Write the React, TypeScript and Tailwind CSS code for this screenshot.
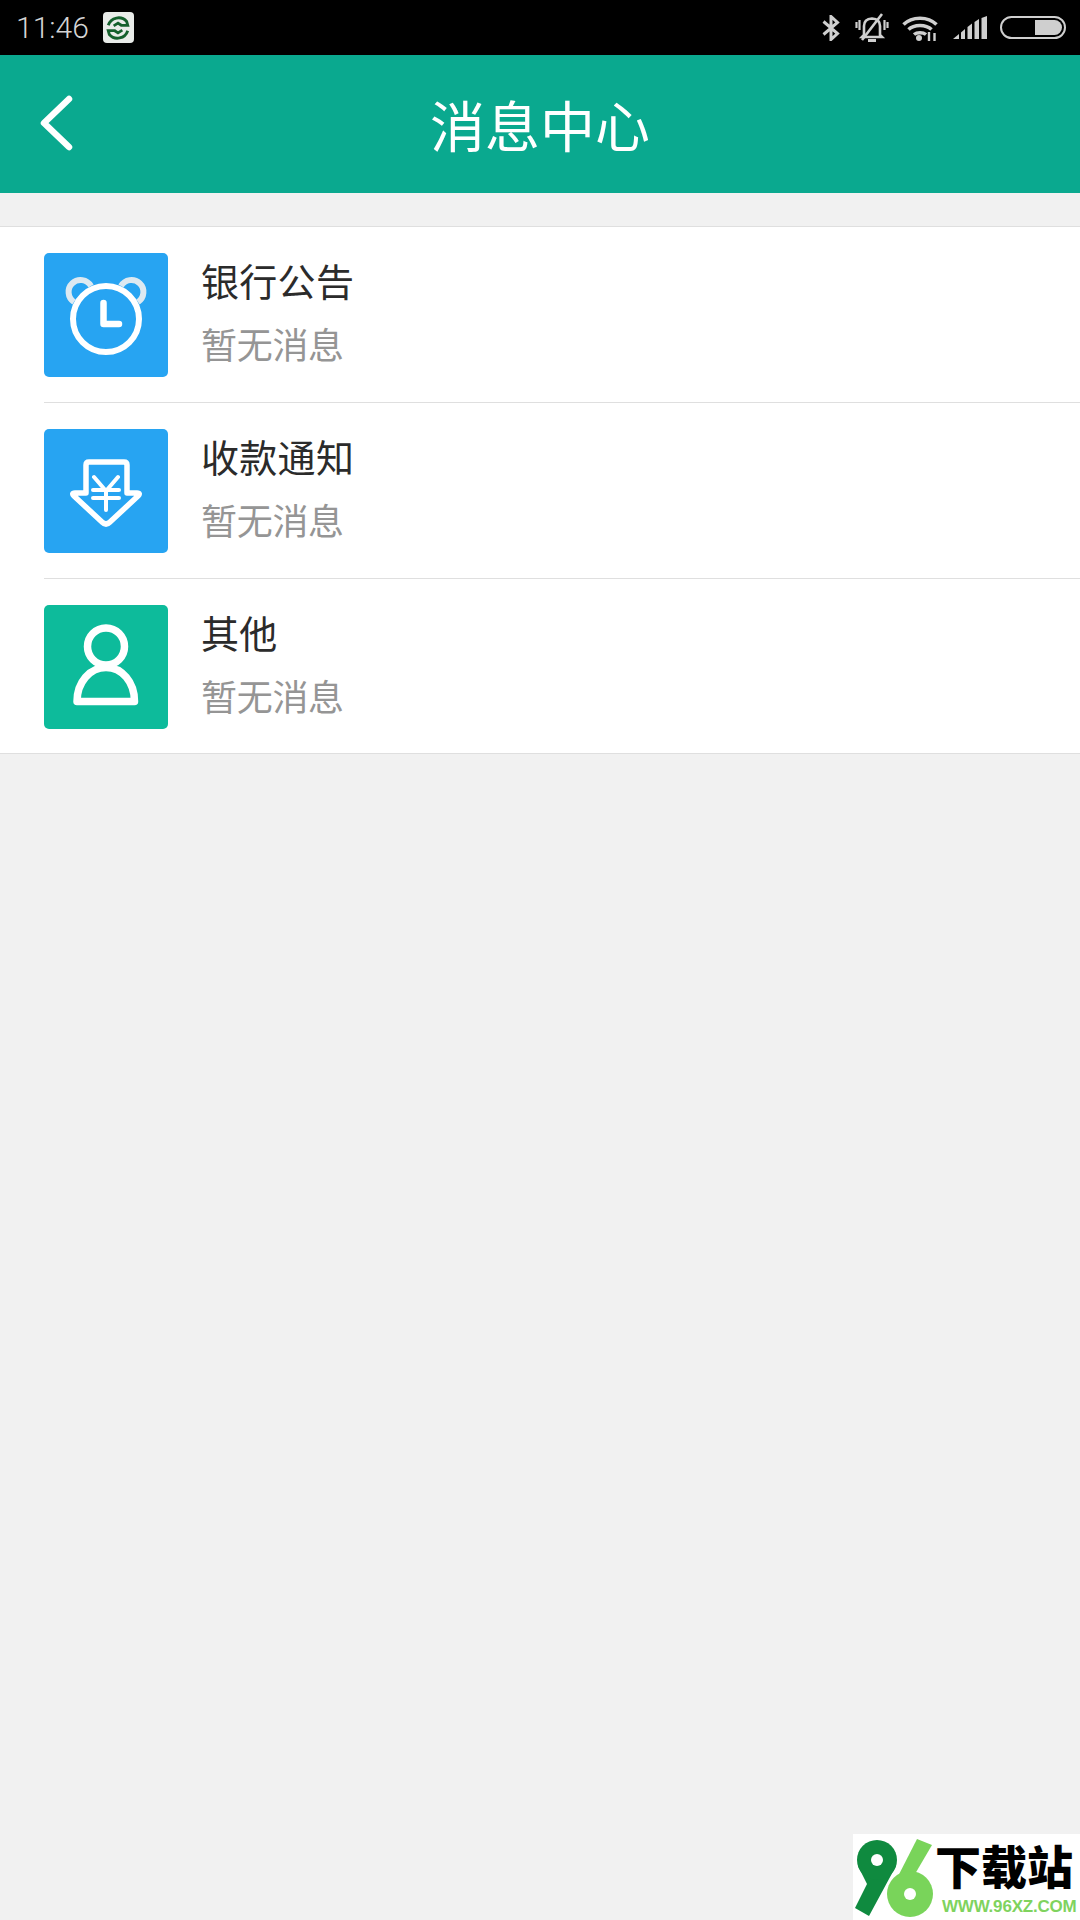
import * as React from "react";

const cjk = { fontFamily: '"Noto Sans CJK SC", "Noto Sans", sans-serif' };

const AlarmIcon = () => (
  <svg viewBox="0 0 124 124" className="w-full h-full" fill="none" stroke="#fff" strokeWidth="6">
    <path d="M30 49 A12 12 0 1 1 47 33" stroke="#dde9f1" strokeWidth="6" />
    <path d="M77 33 A12 12 0 1 1 94 49" stroke="#dde9f1" strokeWidth="6" />
    <circle cx="62" cy="66" r="33" />
    <path d="M59.500 50V71H75" strokeWidth="6.500" strokeLinecap="round" strokeLinejoin="round" />
  </svg>
);

const ArrowIcon = () => (
  <svg viewBox="0 0 124 124" className="w-full h-full" fill="none" stroke="#fff" strokeLinejoin="round" strokeLinecap="round">
    <path d="M42 64V36Q42 33 45 33H80Q83 33 83 36V64H93Q97 64 94 67L66 93Q62 97 58 93L30 67Q27 64 31 64Z" strokeWidth="5.500" />
    <path d="M50 48L62 62L74 48M49 61H75M49 69H75M62 62V81" strokeWidth="4" />
  </svg>
);

const PersonIcon = () => (
  <svg viewBox="0 0 124 124" className="w-full h-full" fill="none" stroke="#fff" strokeWidth="7.500">
    <circle cx="62" cy="41.500" r="18.500" />
    <path d="M33 96.500C33 77 46 62.500 62 62.500C78 62.500 90.500 77 90.500 96.500Z" strokeLinejoin="round" />
  </svg>
);

const rows = [
  { title: "银行公告", bg: "bg-[#27a4f2]", icon: <AlarmIcon /> },
  { title: "收款通知", bg: "bg-[#27a4f2]", icon: <ArrowIcon /> },
  { title: "其他", bg: "bg-[#0dbb9b]", icon: <PersonIcon /> },
];

const StatusIcons = () => (
  <div className="flex items-center">
    <svg viewBox="0 0 18 26" className="w-[18px] h-[26px] mr-[15px]" fill="none" stroke="#cfcfcf" strokeWidth="3">
      <path d="M1.500 6.500L15.500 18.500L9 24.500V1.500L15.500 7.500L1.500 19.500" />
    </svg>
    <svg viewBox="0 0 34 30" className="w-[34px] h-[30px] mr-[13px]" fill="none" stroke="#cfcfcf" strokeWidth="2.600">
      <path d="M9 22V13Q9 6 17 5.500Q25 6 25 13V22L27 24H7Z" />
      <path d="M27 1L7 27" strokeWidth="2.600" />
      <path d="M13 27.500H21" strokeWidth="3" />
      <path d="M4.500 7V17M1.500 9V15M29.500 7V17M32.500 9V15" strokeWidth="2.200" />
    </svg>
    <svg viewBox="0 0 36 26" className="w-[36px] h-[26px] mr-[15px]" fill="none" stroke="#cfcfcf" strokeWidth="3.500">
      <path d="M1.500 9.500C10 1 26 1 34.500 9.500" />
      <path d="M6.500 14.500C12 9 24 9 29.500 14.500" />
      <path d="M12 19.500C15 17 21 17 24 19.500" />
      <circle cx="17" cy="23" r="3" fill="#cfcfcf" stroke="none" />
      <path d="M27 26V17M32.500 26V18" strokeWidth="2.400" />
    </svg>
    <svg viewBox="0 0 34 24" className="w-[34px] h-[24px] mr-[13px]" fill="#cfcfcf">
      <path d="M0 23L6 18V23Z" />
      <path d="M8 16.500L12 13V23H8Z" />
      <path d="M14.500 11L19 7.500V23H14.500Z" />
      <path d="M21.500 6L26 3V23H21.500Z" />
      <path d="M28.500 2L34 0V23H28.500Z" />
    </svg>
    <div className="w-[66px] h-[23px] rounded-full border-2 border-[#cfcfcf] flex justify-end items-center p-[2px] mr-[14px]">
      <div className="w-[27px] h-[15px] bg-[#cfcfcf] rounded-r-full" />
    </div>
  </div>
);

const Watermark = () => (
  <div className="absolute right-0 bottom-0 w-[227px] h-[86px] bg-white flex">
    <svg viewBox="0 0 82 86" className="w-[82px] h-[86px] shrink-0">
      <path d="M5 32H43L16 82L2 74L14 50Z" fill="#0f8a3f" />
      <circle cx="24" cy="26" r="20" fill="#0f8a3f" />
      <circle cx="24" cy="26" r="6" fill="#fff" />
      <path d="M64 5L79 11L62 40L36 60Z" fill="#79d45a" />
      <circle cx="57" cy="60" r="23" fill="#79d45a" />
      <circle cx="57" cy="60" r="6" fill="#fff" />
    </svg>
    <div className="flex flex-col">
      <span className="text-[46px] leading-[46px] mt-[7px] font-black text-black whitespace-nowrap" style={cjk}>
        下载站
      </span>
      <span className="text-[17px] leading-[17px] mt-[11px] ml-[7px] font-bold tracking-[-0.2px] text-[#7fd35e] font-['Liberation_Sans',sans-serif] whitespace-nowrap">
        WWW.96XZ.COM
      </span>
    </div>
  </div>
);

export default function App() {
  return (
    <div className="relative w-[1080px] h-[1920px] bg-[#f1f1f1] flex flex-col overflow-hidden" style={cjk}>
      <div className="h-[55px] bg-black flex items-center justify-between pl-[16px]">
        <div className="flex items-center">
          <span className="text-[30px] leading-none font-light text-[#d4d4d4] font-['Roboto',sans-serif]">11:46</span>
          <div className="w-[31px] h-[31px] ml-[14px] rounded-[4px] bg-[#e9ece9] flex items-center justify-center">
            <svg viewBox="0 0 24 24" className="w-[26px] h-[26px]" fill="none" stroke="#14602c" strokeWidth="2.600">
              <path d="M3 9.500A10 10 0 0 1 20 6L21 9.500H15L12 7.500L8 10" />
              <path d="M21 14.500A10 10 0 0 1 4 18L3 14.500H9L12 16.500L16 14" />
            </svg>
          </div>
        </div>
        <StatusIcons />
      </div>

      <div className="h-[138px] bg-[#0aa98f] flex items-center relative">
        <svg viewBox="0 0 36 60" className="w-[36px] h-[60px] ml-[38px] -mt-[2px]" fill="none" stroke="#fff" strokeWidth="6.500" strokeLinecap="round" strokeLinejoin="round">
          <path d="M31 6L6 30L31 54" />
        </svg>
        <span className="absolute inset-x-0 text-center text-[55px] leading-none font-normal text-white -mt-[2px]">消息中心</span>
      </div>

      <div className="mt-[33px] bg-white border-y border-[#dfdfdf]">
        {rows.map((row, i) => (
          <div key={row.title} className="pl-[44px]">
            <div className={`flex pt-[26px] ${i < 2 ? "pb-[25px] border-b border-[#dfdfdf]" : "pb-[24px]"}`}>
              <div className={`w-[124px] h-[124px] rounded-[5px] overflow-hidden shrink-0 ${row.bg}`}>{row.icon}</div>
              <div className="ml-[33px] flex flex-col">
                <span className="text-[38px] leading-[50px] mt-[2px] text-[#2b2b2b] font-normal tracking-[0.3px]">{row.title}</span>
                <span className="text-[36px] leading-[50px] mt-[13px] text-[#959595] font-normal tracking-[-0.3px]">暂无消息</span>
              </div>
            </div>
          </div>
        ))}
      </div>

      <Watermark />
    </div>
  );
}
